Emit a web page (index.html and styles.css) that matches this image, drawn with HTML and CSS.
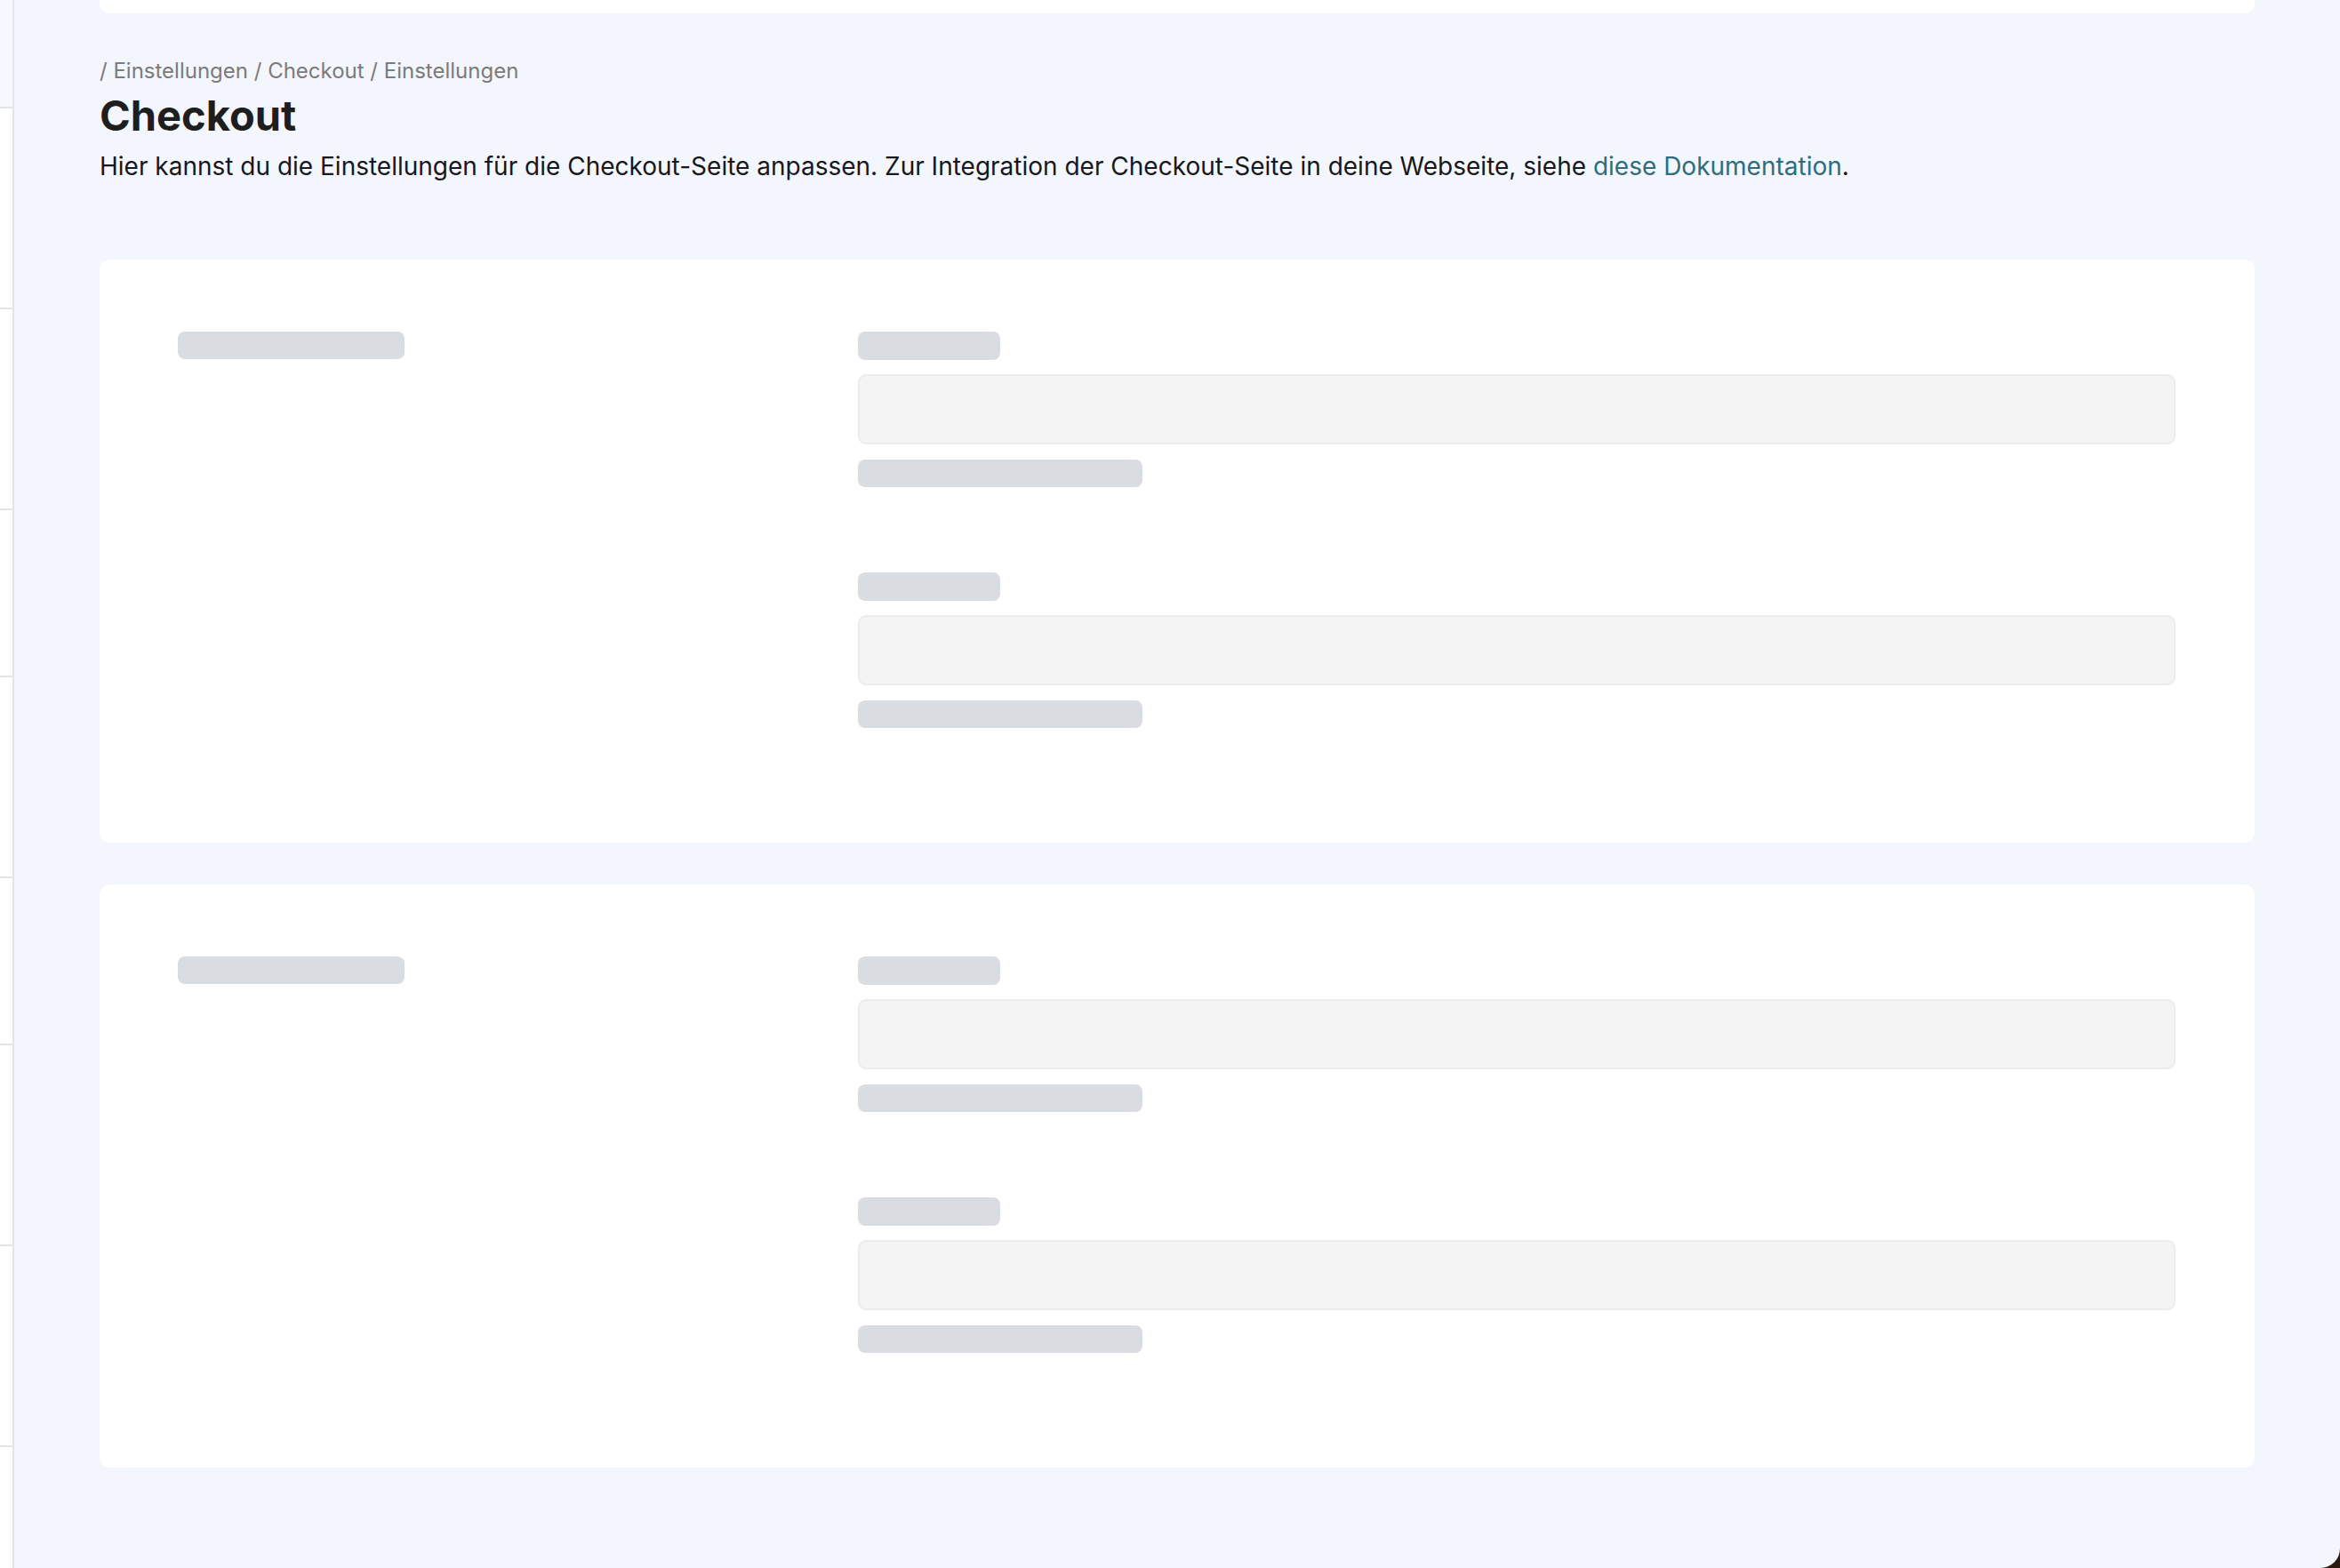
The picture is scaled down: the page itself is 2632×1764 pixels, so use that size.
FILE: index.html
```html
<!DOCTYPE html>
<html lang="de">
<head>
    <meta charset="UTF-8">
    <meta name="viewport" content="width=device-width, initial-scale=1.0">
    <title>Checkout – Einstellungen</title>
    <link rel="stylesheet" href="styles.css">
</head>
<body>
    <div class="app">
        <aside class="sidebar">
            <div class="side-head"></div>
            <div class="side-row r1"></div>
            <div class="side-row r1"></div>
            <div class="side-row r2"></div>
            <div class="side-row r1"></div>
            <div class="side-row r2"></div>
            <div class="side-row r1"></div>
            <div class="side-row r1"></div>
            <div class="side-row r1"></div>
        </aside>
        <main class="content">
            <div class="top-card"></div>
            <header class="page-head">
                <div class="breadcrumb">/ Einstellungen / Checkout / Einstellungen</div>
                <h1 class="page-title">Checkout</h1>
                <p class="page-desc">Hier kannst du die Einstellungen für die Checkout-Seite anpassen. Zur Integration der Checkout-Seite in deine Webseite, siehe <a href="#">diese Dokumentation</a>.</p>
            </header>

            <section class="card">
                <div class="card-side">
                    <div class="skel skel-title"></div>
                </div>
                <div class="card-fields">
                    <div class="field">
                        <div class="skel skel-label"></div>
                        <div class="skel-input"></div>
                        <div class="skel skel-help"></div>
                    </div>
                    <div class="field">
                        <div class="skel skel-label"></div>
                        <div class="skel-input"></div>
                        <div class="skel skel-help"></div>
                    </div>
                </div>
            </section>

            <section class="card">
                <div class="card-side">
                    <div class="skel skel-title"></div>
                </div>
                <div class="card-fields">
                    <div class="field">
                        <div class="skel skel-label"></div>
                        <div class="skel-input"></div>
                        <div class="skel skel-help"></div>
                    </div>
                    <div class="field">
                        <div class="skel skel-label"></div>
                        <div class="skel-input"></div>
                        <div class="skel skel-help"></div>
                    </div>
                </div>
            </section>
        </main>
    </div>
</body>
</html>
```

FILE: styles.css
```css
:root {
    --page-bg: #f3f6fd;
    --card-bg: #ffffff;
    --skel: #d9dce0;
    --input-bg: #f4f4f5;
    --input-border: #ecece8;
    --line: #e4e4e7;
    --text: #17171c;
    --muted: #7b7b79;
    --link: #2e6c7e;
    --font-family: 'Inter', 'Noto Sans', sans-serif;
}
html, body {
    margin: 0;
    height: 100%;
}
body {
    background-color: #2c1a0f;
    font-family: var(--font-family);
    color: var(--text);
    overflow: hidden;
}
.app {
    display: flex;
    height: 1764px;
    background-color: var(--page-bg);
    border-bottom-right-radius: 22px;
    overflow: hidden;
}
.sidebar {
    width: 14px;
    flex-shrink: 0;
    background-color: #ffffff;
    border-right: 2px solid var(--line);
}
.side-head {
    height: 120px;
    background-color: #f5f8fd;
    border-bottom: 2px solid var(--line);
}
.side-row {
    border-bottom: 2px solid var(--line);
}
.side-row.r1 {
    height: 224px;
}
.side-row.r2 {
    height: 186px;
}
.content {
    flex: 1;
    padding: 0 96px;
}
.top-card {
    height: 15px;
    background-color: var(--card-bg);
    border-radius: 0 0 12px 12px;
}
.page-head {
    margin-top: 49px;
    margin-bottom: 85px;
}
.breadcrumb {
    font-size: 24px;
    line-height: 32px;
    color: var(--muted);
}
.page-title {
    margin: 6px 0 0;
    font-size: 47px;
    line-height: 56px;
    font-weight: 700;
    color: #1e1e1e;
}
.page-desc {
    margin: 9px 0 0;
    font-size: 28px;
    line-height: 40px;
}
.page-desc a {
    color: var(--link);
    text-decoration: none;
}
.card {
    display: grid;
    grid-template-columns: repeat(3, 1fr);
    gap: 48px;
    height: 656px;
    box-sizing: border-box;
    padding: 81px 89px 0 88px;
    margin-bottom: 47px;
    background-color: var(--card-bg);
    border-radius: 12px;
}
.card-fields {
    grid-column: span 2;
    display: flex;
    flex-direction: column;
    gap: 96px;
}
.field {
    display: flex;
    flex-direction: column;
}
.skel {
    background-color: var(--skel);
    border-radius: 8px;
}
.skel-title {
    width: 255px;
    height: 31px;
}
.skel-label {
    width: 160px;
    height: 32px;
    margin-bottom: 16px;
}
.skel-input {
    height: 79px;
    box-sizing: border-box;
    background-color: var(--input-bg);
    border: 2px solid var(--input-border);
    border-radius: 9px;
    margin-bottom: 17px;
}
.skel-help {
    width: 320px;
    height: 31px;
}
```
